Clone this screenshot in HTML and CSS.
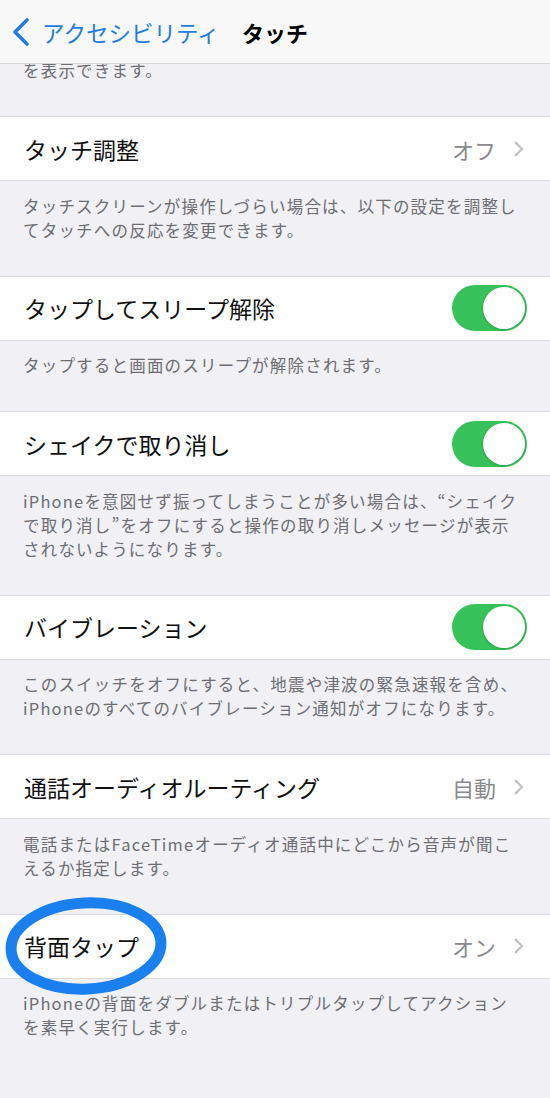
FILE: index.html
```html
<!DOCTYPE html>
<html lang="ja">
<head>
    <meta charset="UTF-8">
    <meta name="viewport" content="width=device-width, initial-scale=1.0">
    <title>タッチ</title>
    <link rel="stylesheet" href="styles.css">
</head>
<body>
    <header class="nav">
        <a class="back" href="#">
            <svg class="back-icon" width="20" height="30" viewBox="0 0 20 30">
                <path d="M16 3 L4 15 L16 27" fill="none" stroke="#1f7ee0" stroke-width="3.6" stroke-linecap="round" stroke-linejoin="round"/>
            </svg>
            <span>アクセシビリティ</span>
        </a>
        <h1 class="title">タッチ</h1>
        <span></span>
    </header>

    <main class="list">
        <p class="footer footer-top">を表示できます。</p>

        <div class="group">
            <div class="cell">
                <span class="label">タッチ調整</span>
                <span class="value">オフ</span>
                <svg class="chevron" width="10" height="16" viewBox="0 0 10 16">
                    <path d="M1.8 1.8 L8 8 L1.8 14.2" fill="none" stroke="#c4c4c8" stroke-width="2.4" stroke-linecap="round" stroke-linejoin="round"/>
                </svg>
            </div>
        </div>
        <p class="footer">タッチスクリーンが操作しづらい場合は、以下の設定を調整し<br>てタッチへの反応を変更できます。</p>

        <div class="group">
            <div class="cell">
                <span class="label">タップしてスリープ解除</span>
                <span class="switch"><span class="knob"></span></span>
            </div>
        </div>
        <p class="footer">タップすると画面のスリープが解除されます。</p>

        <div class="group">
            <div class="cell">
                <span class="label">シェイクで取り消し</span>
                <span class="switch"><span class="knob"></span></span>
            </div>
        </div>
        <p class="footer">iPhoneを意図せず振ってしまうことが多い場合は、“シェイク<br>で取り消し”をオフにすると操作の取り消しメッセージが表示<br>されないようになります。</p>

        <div class="group">
            <div class="cell">
                <span class="label">バイブレーション</span>
                <span class="switch"><span class="knob"></span></span>
            </div>
        </div>
        <p class="footer">このスイッチをオフにすると、地震や津波の緊急速報を含め、<br>iPhoneのすべてのバイブレーション通知がオフになります。</p>

        <div class="group">
            <div class="cell">
                <span class="label">通話オーディオルーティング</span>
                <span class="value">自動</span>
                <svg class="chevron" width="10" height="16" viewBox="0 0 10 16">
                    <path d="M1.8 1.8 L8 8 L1.8 14.2" fill="none" stroke="#c4c4c8" stroke-width="2.4" stroke-linecap="round" stroke-linejoin="round"/>
                </svg>
            </div>
        </div>
        <p class="footer">電話またはFaceTimeオーディオ通話中にどこから音声が聞こ<br>えるか指定します。</p>

        <div class="group marked">
            <div class="cell">
                <span class="label">背面タップ</span>
                <span class="value">オン</span>
                <svg class="chevron" width="10" height="16" viewBox="0 0 10 16">
                    <path d="M1.8 1.8 L8 8 L1.8 14.2" fill="none" stroke="#c4c4c8" stroke-width="2.4" stroke-linecap="round" stroke-linejoin="round"/>
                </svg>
            </div>
            <!-- hand-drawn highlight -->
            <svg class="circle-mark" width="180" height="120" viewBox="0 0 180 120">
                <ellipse cx="86" cy="59" rx="75" ry="43" transform="rotate(-3 86 59)" fill="none" stroke="#1a80f0" stroke-width="11"/>
            </svg>
        </div>
        <p class="footer">iPhoneの背面をダブルまたはトリプルタップしてアクション<br>を素早く実行します。</p>
    </main>
</body>
</html>
```

FILE: styles.css
```css
body {
    font-family: "Noto Sans CJK JP", "Noto Sans", sans-serif;
    background-color: #f0f0f5;
    color: #111;
    margin: 0;
    padding: 0;
}

.nav {
    position: fixed;
    top: 0;
    left: 0;
    right: 0;
    z-index: 2;
    height: 63px;
    display: grid;
    grid-template-columns: 1fr auto 1fr;
    align-items: center;
    background-color: #f8f8f9;
    border-bottom: 1px solid #d6d6da;
}

.back {
    display: flex;
    align-items: center;
    gap: 11px;
    padding-left: 11px;
    color: #1f7ee0;
    font-size: 22.5px;
    text-decoration: none;
    white-space: nowrap;
}

.back-icon {
    display: block;
}

.title {
    margin: 0;
    font-size: 22px;
    font-weight: 700;
    color: #000;
}

.list {
    padding-bottom: 20px;
}

.group {
    background-color: #fff;
    border-top: 1px solid #dcdce0;
    border-bottom: 1px solid #dcdce0;
}

.marked {
    position: relative;
}

.cell {
    height: 63px;
    display: flex;
    align-items: center;
    padding: 0 23px 0 24px;
    font-size: 23px;
}

.label {
    flex: 1;
    color: #111;
}

.value {
    font-size: 22px;
    color: #8a8a8e;
    margin-right: 18px;
}

.chevron {
    display: block;
    margin-right: 3px;
}

.switch {
    width: 75px;
    height: 46px;
    padding: 2px;
    box-sizing: border-box;
    border-radius: 23px;
    background-color: #35c35a;
    display: flex;
    justify-content: flex-end;
}

.knob {
    width: 42px;
    height: 42px;
    border-radius: 50%;
    background-color: #fff;
    box-shadow: 0 1px 3px rgba(0, 0, 0, 0.2);
}

.footer {
    margin: 0;
    padding: 12.5px 10px 34px 23px;
    font-size: 16.5px;
    letter-spacing: 1.2px;
    line-height: 24px;
    color: #6d6d72;
    white-space: nowrap;
}

.footer-top {
    padding-top: 58px;
}

.circle-mark {
    position: absolute;
    left: 0;
    top: -28px;
    pointer-events: none;
}
```
